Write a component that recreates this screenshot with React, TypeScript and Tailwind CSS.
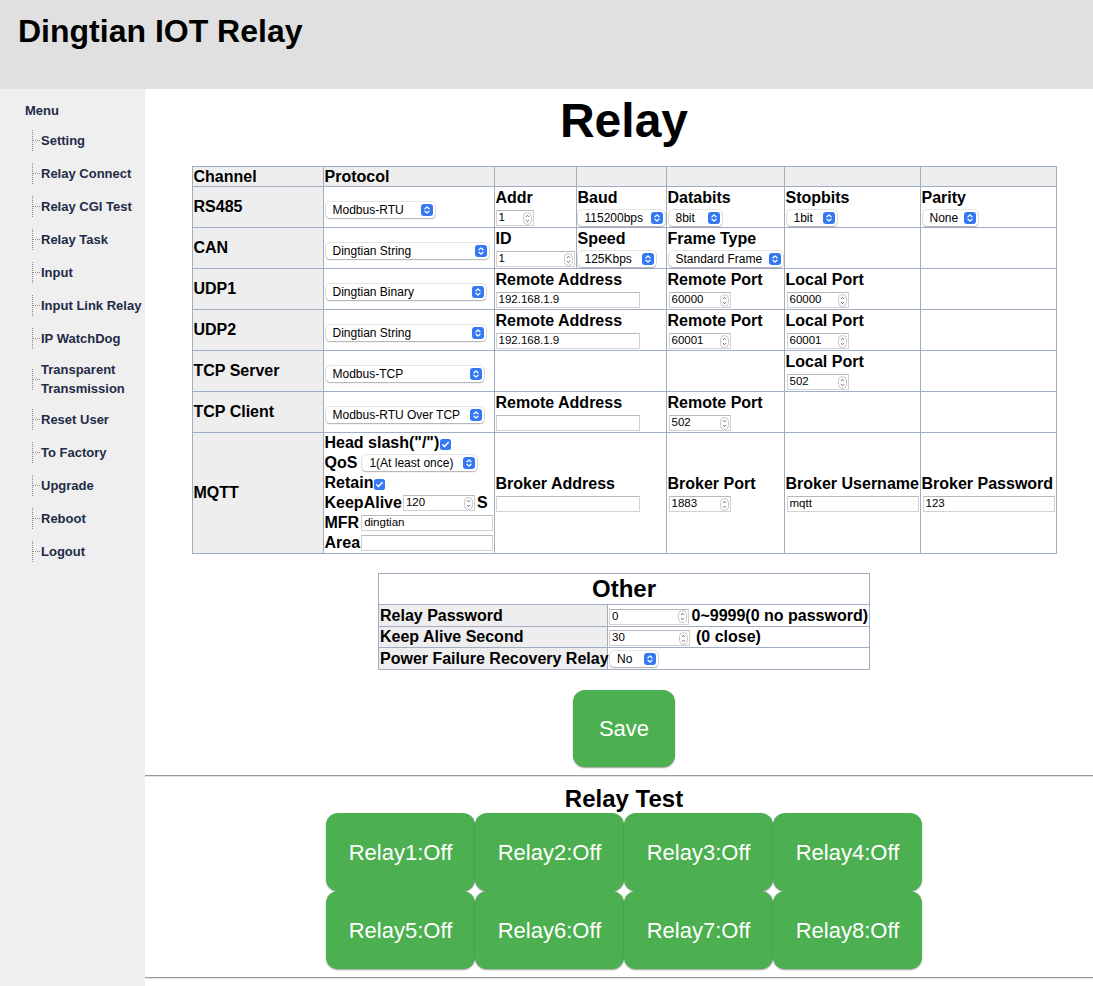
import React from 'react'

const menu = [
  'Setting',
  'Relay Connect',
  'Relay CGI Test',
  'Relay Task',
  'Input',
  'Input Link Relay',
  'IP WatchDog',
  'Transparent Transmission',
  'Reset User',
  'To Factory',
  'Upgrade',
  'Reboot',
  'Logout',
]

// cell styles for the two config tables
const cell = 'border border-[#a0aec4] p-[1px]'
const gray = 'bg-[#eeeeee]'

const Select = ({ value, className }: { value: string; className: string }) => (
  <span
    className={`inline-flex h-[16px] items-center justify-between rounded-[4px] bg-white pl-[7px] pr-[2px] text-[12px] font-normal leading-none text-black shadow-[0_0_0_0.5px_rgba(0,0,0,0.2),0_1px_1.5px_rgba(0,0,0,0.25)] ${className}`}
  >
    <span className="whitespace-nowrap">{value}</span>
    <svg width="12" height="12" viewBox="0 0 12 12" className="shrink-0">
      <rect width="12" height="12" rx="3" fill="#3478f6" />
      <path
        d="M4 4.8 6 2.9 8 4.8M4 7.2 6 9.1 8 7.2"
        fill="none"
        stroke="#fff"
        strokeWidth="1.3"
        strokeLinecap="round"
        strokeLinejoin="round"
      />
    </svg>
  </span>
)

const NumInput = ({ value, className }: { value: string; className: string }) => (
  <span
    className={`inline-flex h-[16px] items-center justify-between border border-[#d2d2d2] border-t-[#b8b8b8] bg-white pl-[2px] pr-[1px] text-[11.5px] font-normal leading-none text-black ${className}`}
  >
    <span>{value}</span>
    <svg width="9" height="13" viewBox="0 0 9 13" className="shrink-0">
      <rect x="0.5" y="0.5" width="8" height="12" rx="4" fill="#fff" stroke="#c6c6c6" />
      <path d="M2.9 4.9 4.5 3.3 6.1 4.9M2.9 8.1 4.5 9.7 6.1 8.1" fill="none" stroke="#555" strokeWidth="0.9" />
    </svg>
  </span>
)

const TextInput = ({ value = '', className }: { value?: string; className: string }) => (
  <span
    className={`inline-flex h-[16px] items-center border border-[#d2d2d2] border-t-[#b8b8b8] bg-white pl-[2px] text-[11.5px] font-normal leading-none text-black ${className}`}
  >
    {value}
  </span>
)

const Check = () => (
  <svg width="11" height="11" viewBox="0 0 11 11" className="ml-[1px] mt-[2px] shrink-0">
    <rect width="11" height="11" rx="2.5" fill="#3478f6" />
    <path d="M2.7 5.7 4.5 7.6 8.3 3.5" fill="none" stroke="#fff" strokeWidth="1.5" strokeLinecap="round" strokeLinejoin="round" />
  </svg>
)

const Field = ({ label, children }: { label: string; children?: React.ReactNode }) => (
  <>
    <div className="whitespace-nowrap text-[16px] font-bold leading-[19px]">{label}</div>
    <div className="mt-[3px] flex h-[16px] items-center">{children}</div>
  </>
)

const ChannelCell = ({ name }: { name: string }) => (
  <td className={`${cell} ${gray} align-middle text-[16px] font-bold`}>{name}</td>
)

const ProtoCell = ({ value, className }: { value: string; className: string }) => (
  <td className={`${cell} pt-[7px] align-middle`}>
    <div className="flex pl-[1px]">
      <Select value={value} className={className} />
    </div>
  </td>
)

function Sidebar() {
  return (
    <aside className="w-[145px] shrink-0 bg-[#efefef] text-[13px] font-bold text-[#1e2b47]">
      <div className="mt-[12px] pl-[25px] leading-[19px]">Menu</div>
      <ul className="mt-[4px]">
        {menu.map((item) => (
          <li key={item} className="flex min-h-[33px] items-center py-[5px] pl-[32px] pr-[2px]">
            <span className="flex shrink-0 items-center self-center">
              <span className="h-[21px] border-l border-dotted border-[#8a8a8a]" />
              <span className="w-[7px] border-t border-dotted border-[#8a8a8a]" />
            </span>
            <span className="ml-[1px] leading-[19px]">{item}</span>
          </li>
        ))}
      </ul>
    </aside>
  )
}

function ChannelTable() {
  return (
    <table className="w-[865px] table-fixed border-collapse text-left text-black">
      <colgroup>
        <col className="w-[131px]" />
        <col className="w-[171px]" />
        <col className="w-[82px]" />
        <col className="w-[90px]" />
        <col className="w-[118px]" />
        <col className="w-[136px]" />
        <col className="w-[136px]" />
      </colgroup>
      <tbody>
        <tr className="text-[16px] font-bold leading-[17px]">
          <td className={`${cell} ${gray}`}>Channel</td>
          <td className={`${cell} ${gray}`}>Protocol</td>
          <td className={`${cell} ${gray}`} />
          <td className={`${cell} ${gray}`} />
          <td className={`${cell} ${gray}`} />
          <td className={`${cell} ${gray}`} />
          <td className={`${cell} ${gray}`} />
        </tr>

        <tr className="h-[41px] align-top">
          <ChannelCell name="RS485" />
          <ProtoCell value="Modbus-RTU" className="w-[109px]" />
          <td className={cell}>
            <Field label="Addr">
              <NumInput value="1" className="w-[38px]" />
            </Field>
          </td>
          <td className={cell}>
            <Field label="Baud">
              <Select value="115200bps" className="w-[87px]" />
            </Field>
          </td>
          <td className={cell}>
            <Field label="Databits">
              <Select value="8bit" className="ml-[1px] w-[53px]" />
            </Field>
          </td>
          <td className={cell}>
            <Field label="Stopbits">
              <Select value="1bit" className="ml-[1px] w-[50px]" />
            </Field>
          </td>
          <td className={cell}>
            <Field label="Parity">
              <Select value="None" className="ml-[1px] w-[55px]" />
            </Field>
          </td>
        </tr>

        <tr className="h-[41px] align-top">
          <ChannelCell name="CAN" />
          <ProtoCell value="Dingtian String" className="w-[163px]" />
          <td className={cell}>
            <Field label="ID">
              <NumInput value="1" className="w-[80px]" />
            </Field>
          </td>
          <td className={cell}>
            <Field label="Speed">
              <Select value="125Kbps" className="w-[78px]" />
            </Field>
          </td>
          <td className={cell}>
            <Field label="Frame Type">
              <Select value="Standard Frame" className="ml-[1px] w-[115px]" />
            </Field>
          </td>
          <td className={cell} />
          <td className={cell} />
        </tr>

        <tr className="h-[41px] align-top">
          <ChannelCell name="UDP1" />
          <ProtoCell value="Dingtian Binary" className="w-[160px]" />
          <td className={cell} colSpan={2}>
            <Field label="Remote Address">
              <TextInput value="192.168.1.9" className="w-[144px]" />
            </Field>
          </td>
          <td className={cell}>
            <Field label="Remote Port">
              <NumInput value="60000" className="ml-[1px] w-[62px]" />
            </Field>
          </td>
          <td className={cell}>
            <Field label="Local Port">
              <NumInput value="60000" className="ml-[1px] w-[62px]" />
            </Field>
          </td>
          <td className={cell} />
        </tr>

        <tr className="h-[41px] align-top">
          <ChannelCell name="UDP2" />
          <ProtoCell value="Dingtian String" className="w-[160px]" />
          <td className={cell} colSpan={2}>
            <Field label="Remote Address">
              <TextInput value="192.168.1.9" className="w-[144px]" />
            </Field>
          </td>
          <td className={cell}>
            <Field label="Remote Port">
              <NumInput value="60001" className="ml-[1px] w-[62px]" />
            </Field>
          </td>
          <td className={cell}>
            <Field label="Local Port">
              <NumInput value="60001" className="ml-[1px] w-[62px]" />
            </Field>
          </td>
          <td className={cell} />
        </tr>

        <tr className="h-[41px] align-top">
          <ChannelCell name="TCP Server" />
          <ProtoCell value="Modbus-TCP" className="w-[158px]" />
          <td className={cell} colSpan={2} />
          <td className={cell} />
          <td className={cell}>
            <Field label="Local Port">
              <NumInput value="502" className="ml-[1px] w-[62px]" />
            </Field>
          </td>
          <td className={cell} />
        </tr>

        <tr className="h-[41px] align-top">
          <ChannelCell name="TCP Client" />
          <ProtoCell value="Modbus-RTU Over TCP" className="w-[158px]" />
          <td className={cell} colSpan={2}>
            <Field label="Remote Address">
              <TextInput className="w-[144px]" />
            </Field>
          </td>
          <td className={cell}>
            <Field label="Remote Port">
              <NumInput value="502" className="ml-[1px] w-[62px]" />
            </Field>
          </td>
          <td className={cell} />
          <td className={cell} />
        </tr>

        <tr className="align-middle">
          <ChannelCell name="MQTT" />
          <td className="border border-[#a0aec4] px-[1px] py-0 text-[16px] font-bold leading-[20px]">
            <div className="flex h-[20px] items-center whitespace-nowrap">
              Head slash("/")
              <Check />
            </div>
            <div className="flex h-[20px] items-center">
              QoS
              <Select value="1(At least once)" className="ml-[5px] w-[115px]" />
            </div>
            <div className="flex h-[20px] items-center">
              Retain
              <Check />
            </div>
            <div className="flex h-[20px] items-center">
              KeepAlive
              <NumInput value="120" className="ml-[1px] w-[72px]" />
              <span className="ml-[2px]">S</span>
            </div>
            <div className="flex h-[20px] items-center">
              MFR
              <TextInput value="dingtian" className="ml-[2px] flex-1" />
            </div>
            <div className="flex h-[20px] items-center">
              Area
              <TextInput className="ml-[1px] flex-1" />
            </div>
          </td>
          <td className={cell} colSpan={2}>
            <Field label="Broker Address">
              <TextInput className="w-[144px]" />
            </Field>
          </td>
          <td className={cell}>
            <Field label="Broker Port">
              <NumInput value="1883" className="ml-[1px] w-[62px]" />
            </Field>
          </td>
          <td className={cell}>
            <Field label="Broker Username">
              <TextInput value="mqtt" className="ml-[1px] w-[133px]" />
            </Field>
          </td>
          <td className={cell}>
            <Field label="Broker Password">
              <TextInput value="123" className="ml-[1px] w-[133px]" />
            </Field>
          </td>
        </tr>
      </tbody>
    </table>
  )
}

function OtherTable() {
  return (
    <table className="mt-[19px] w-[491px] table-fixed border-collapse text-left text-[16px] font-bold text-black">
      <colgroup>
        <col className="w-[229px]" />
        <col className="w-[262px]" />
      </colgroup>
      <tbody>
        <tr className="h-[30px]">
          <td colSpan={2} className={`${cell} text-center text-[24px] leading-[28px]`}>
            Other
          </td>
        </tr>
        <tr>
          <td className={`${cell} ${gray} leading-[19px]`}>Relay Password</td>
          <td className={cell}>
            <div className="flex items-center">
              <NumInput value="0" className="w-[81px] translate-y-[1px]" />
              <span className="ml-[2px] whitespace-nowrap leading-[19px]">0~9999(0 no password)</span>
            </div>
          </td>
        </tr>
        <tr>
          <td className={`${cell} ${gray} leading-[18px]`}>Keep Alive Second</td>
          <td className={cell}>
            <div className="flex items-center">
              <NumInput value="30" className="w-[81px] translate-y-[1px]" />
              <span className="ml-[6px] whitespace-nowrap leading-[18px]">(0 close)</span>
            </div>
          </td>
        </tr>
        <tr>
          <td className={`${cell} ${gray} whitespace-nowrap leading-[19px]`}>Power Failure Recovery Relay</td>
          <td className={cell}>
            <div className="flex items-center pl-[1px]">
              <Select value="No" className="w-[48px]" />
            </div>
          </td>
        </tr>
      </tbody>
    </table>
  )
}

const GreenButton = ({ label, className }: { label: string; className: string }) => (
  <button
    type="button"
    className={`flex items-center justify-center rounded-[12px] bg-[#4caf50] text-[22px] text-white shadow-[0_1px_1.5px_rgba(0,0,0,0.4)] ${className}`}
  >
    {label}
  </button>
)

const Rule = () => <div className="h-[2px] w-full border-t border-[#9a9a9a] border-b-[#e4e4e4] border-b" />

export default function App() {
  return (
    <div className="flex min-h-screen flex-col bg-white font-['Liberation_Sans',Arial,sans-serif] text-black">
      {/* top bar */}
      <header className="h-[89px] shrink-0 bg-[#e0e0e0] px-[18px] pt-[13px]">
        <h1 className="text-[32px] font-bold leading-[37px]">Dingtian IOT Relay</h1>
      </header>

      <div className="flex flex-1">
        <Sidebar />

        <main className="flex-1">
          <div className="flex flex-col items-center pl-[10px]">
            <h2 className="mt-[4px] text-[48px] font-bold leading-[55px]">Relay</h2>
            <div className="mt-[18px]">
              <ChannelTable />
            </div>
            <OtherTable />
            <GreenButton label="Save" className="mt-[20px] h-[77px] w-[102px]" />
          </div>

          <div className="mt-[8px]">
            <Rule />
          </div>

          <div className="flex flex-col items-center pl-[10px]">
            <h3 className="mt-[8px] text-[24px] font-bold leading-[28px]">Relay Test</h3>
            <div className="grid grid-cols-4">
              {[1, 2, 3, 4, 5, 6, 7, 8].map((n) => (
                <GreenButton key={n} label={`Relay${n}:Off`} className="h-[78px] w-[149px]" />
              ))}
            </div>
          </div>

          <div className="mt-[8px]">
            <Rule />
          </div>
        </main>
      </div>
    </div>
  )
}
